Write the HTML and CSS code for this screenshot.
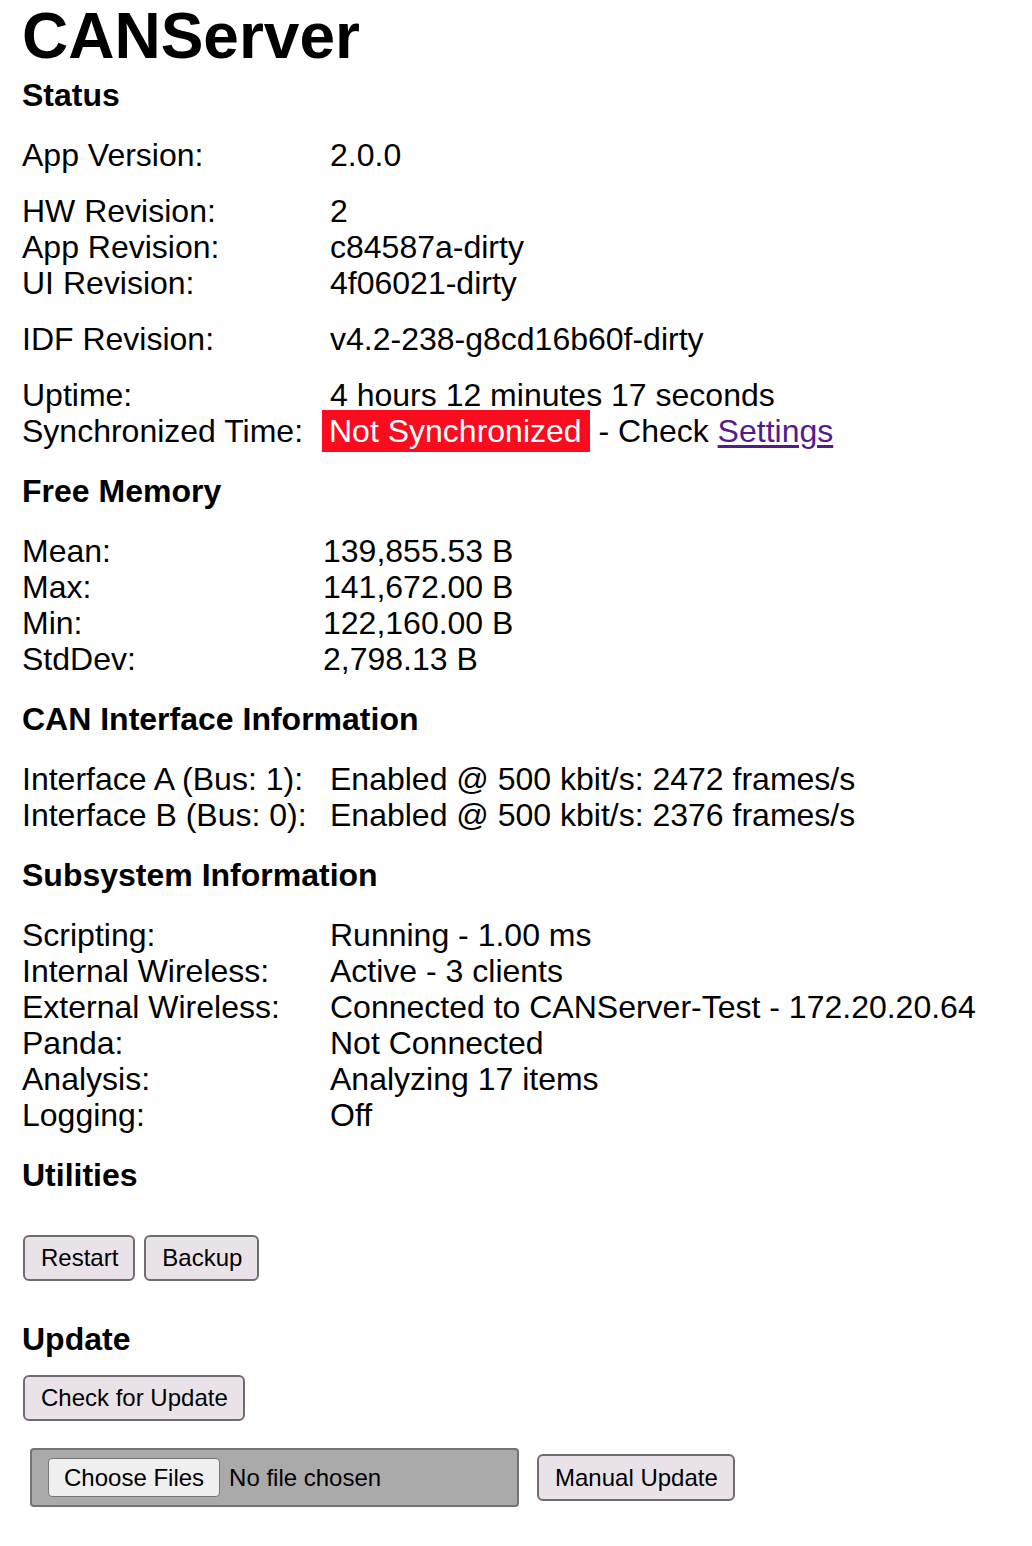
FILE: index.html
```html
<!DOCTYPE html>
<html lang="en">
<head>
<meta charset="utf-8">
<title>CANServer</title>
<link rel="stylesheet" href="styles.css">
</head>
<body>
<h1 class="title">CANServer</h1>

<h4 class="section first">Status</h4>
<div class="info">
  <div class="group">
    <span class="label">App Version:</span><span class="value">2.0.0</span>
  </div>
  <div class="group">
    <span class="label">HW Revision:</span><span class="value">2</span>
    <span class="label">App Revision:</span><span class="value">c84587a-dirty</span>
    <span class="label">UI Revision:</span><span class="value">4f06021-dirty</span>
  </div>
  <div class="group">
    <span class="label">IDF Revision:</span><span class="value">v4.2-238-g8cd16b60f-dirty</span>
  </div>
  <div class="group">
    <span class="label">Uptime:</span><span class="value">4 hours 12 minutes 17 seconds</span>
    <span class="label">Synchronized Time:</span><span class="value"><span class="badge">Not Synchronized</span> - Check <a class="link" href="#settings">Settings</a></span>
  </div>
</div>

<h4 class="section">Free Memory</h4>
<div class="group memory">
  <span class="label">Mean:</span><span class="value">139,855.53 B</span>
  <span class="label">Max:</span><span class="value">141,672.00 B</span>
  <span class="label">Min:</span><span class="value">122,160.00 B</span>
  <span class="label">StdDev:</span><span class="value">2,798.13 B</span>
</div>

<h4 class="section">CAN Interface Information</h4>
<div class="group">
  <span class="label">Interface A (Bus: 1):</span><span class="value">Enabled @ 500 kbit/s: 2472 frames/s</span>
  <span class="label">Interface B (Bus: 0):</span><span class="value">Enabled @ 500 kbit/s: 2376 frames/s</span>
</div>

<h4 class="section">Subsystem Information</h4>
<div class="group">
  <span class="label">Scripting:</span><span class="value">Running - 1.00 ms</span>
  <span class="label">Internal Wireless:</span><span class="value">Active - 3 clients</span>
  <span class="label">External Wireless:</span><span class="value">Connected to CANServer-Test - 172.20.20.64</span>
  <span class="label">Panda:</span><span class="value">Not Connected</span>
  <span class="label">Analysis:</span><span class="value">Analyzing 17 items</span>
  <span class="label">Logging:</span><span class="value">Off</span>
</div>

<h4 class="section">Utilities</h4>
<div class="buttons utilities">
  <button class="btn" type="button">Restart</button>
  <button class="btn" type="button">Backup</button>
</div>

<h4 class="section update-title">Update</h4>
<div class="buttons">
  <button class="btn" type="button">Check for Update</button>
</div>

<form class="upload" action="#">
  <div class="file-box">
    <span class="file-btn">Choose Files</span>
    <span class="file-name">No file chosen</span>
  </div>
  <button class="btn" type="button">Manual Update</button>
</form>
</body>
</html>
```

FILE: styles.css
```css
html, body {
  margin: 0;
  padding: 0;
  background: #ffffff;
}

body {
  padding: 0 0 0 22px;
  font-family: "Liberation Sans", Arial, Helvetica, sans-serif;
  font-size: 32px;
  line-height: 36px;
  color: #000000;
}

.title {
  margin: 0;
  font-size: 64px;
  line-height: 72px;
  font-weight: bold;
}

.section {
  margin: 24px 0;
  font-size: 32px;
  line-height: 36px;
  font-weight: bold;
}

.section.first {
  margin-top: 5px;
}

.info {
  display: flex;
  flex-direction: column;
  gap: 20px;
}

.group {
  display: grid;
  grid-template-columns: 308px auto;
  justify-content: start;
}

.group.memory {
  grid-template-columns: 301px auto;
}

.label, .value {
  white-space: nowrap;
}

.badge {
  background: #fc0a1e;
  color: #ffffff;
  padding: 3px 8px 3px 7px;
  margin-left: -8px;
}

.link {
  color: #551a8b;
  text-decoration: underline;
  text-underline-offset: 3px;
}

.buttons {
  display: flex;
  gap: 9px;
  padding-left: 1px;
}

.utilities {
  margin-top: 42px;
}

.update-title {
  margin-top: 40px;
  margin-bottom: 18px;
}

.btn {
  box-sizing: border-box;
  height: 46px;
  margin: 0;
  padding: 0 15px 0 16px;
  font-family: "Liberation Sans", Arial, Helvetica, sans-serif;
  font-size: 24px;
  line-height: 28px;
  color: #000000;
  background: #e9e3e9;
  border: 2px solid #6f6c70;
  border-radius: 6px;
}

.upload {
  display: flex;
  align-items: center;
  gap: 18px;
  margin: 27px 0 0 8px;
}

.file-box {
  box-sizing: border-box;
  width: 489px;
  height: 59px;
  display: flex;
  align-items: center;
  gap: 9px;
  padding-left: 16px;
  background: #aaaaaa;
  border: 2px solid #737373;
  border-radius: 4px;
}

.file-btn {
  box-sizing: border-box;
  height: 39px;
  display: flex;
  align-items: center;
  padding: 0 15px;
  font-size: 24px;
  line-height: 28px;
  background: #efefef;
  border: 1px solid #767676;
  border-radius: 4px;
}

.file-name {
  font-size: 24px;
  line-height: 28px;
}

.upload .btn {
  height: 47px;
}
```
